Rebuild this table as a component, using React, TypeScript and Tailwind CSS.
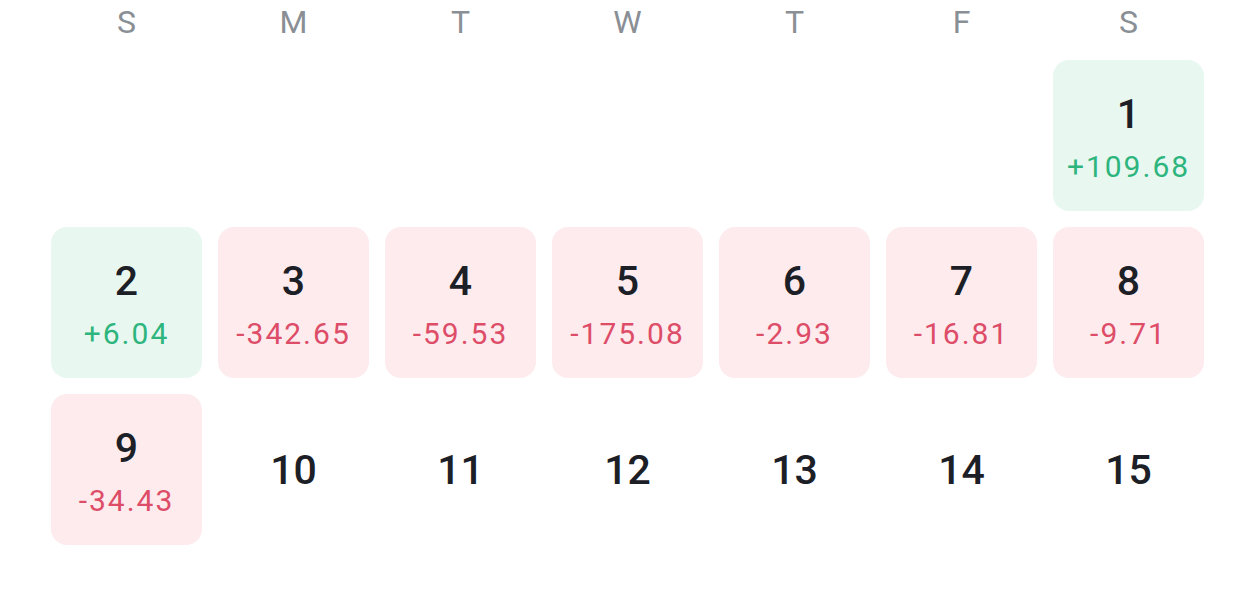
const weekdays = ['S', 'M', 'T', 'W', 'T', 'F', 'S']

type Day = {
    day: number
    pnl?: number
}

// month starts on saturday
const days: (Day | null)[] = [
    null, null, null, null, null, null,
    { day: 1, pnl: 109.68 },
    { day: 2, pnl: 6.04 },
    { day: 3, pnl: -342.65 },
    { day: 4, pnl: -59.53 },
    { day: 5, pnl: -175.08 },
    { day: 6, pnl: -2.93 },
    { day: 7, pnl: -16.81 },
    { day: 8, pnl: -9.71 },
    { day: 9, pnl: -34.43 },
    { day: 10 },
    { day: 11 },
    { day: 12 },
    { day: 13 },
    { day: 14 },
    { day: 15 },
]

function formatPnl(v: number) {
    return (v > 0 ? '+' : '-') + Math.abs(v).toFixed(2)
}

function DayCell({ d }: { d: Day | null }) {
    if (!d) return <div className="h-[151px]" />

    if (d.pnl === undefined) {
        return (
            <div className="flex h-[151px] items-center justify-center">
                <span className="text-[41px] font-medium leading-[44px] text-[#1c2026]">{d.day}</span>
            </div>
        )
    }

    const up = d.pnl > 0

    return (
        <div
            className={
                'flex h-[151px] flex-col items-center rounded-[16px] pt-[32px] ' +
                (up ? 'bg-[#e8f8f0]' : 'bg-[#fdebee]')
            }
        >
            <span className="text-[41px] font-medium leading-[44px] text-[#1c2026]">{d.day}</span>
            <span
                className={
                    'mt-[13px] text-[30px] leading-[36px] tracking-[2px] ' +
                    (up ? 'text-[#2db57d]' : 'text-[#dd4d68]')
                }
            >
                {formatPnl(d.pnl)}
            </span>
        </div>
    )
}

export default function App() {
    return (
        <div
            className="h-[616px] w-[1260px] bg-white pl-[51px]"
            style={{ fontFamily: 'Roboto, "Noto Sans", sans-serif' }}
        >
            <div className="grid w-[1153px] grid-cols-7 gap-x-4 gap-y-4">

                {/* WEEKDAYS */}
                {weekdays.map((w, i) => (
                    <div
                        key={i}
                        className="flex h-[44px] items-center justify-center text-[32px] font-normal text-[#8a8f95]"
                    >
                        {w}
                    </div>
                ))}

                {/* DAYS */}
                {days.map((d, i) => (
                    <DayCell key={i} d={d} />
                ))}

            </div>
        </div>
    )
}
